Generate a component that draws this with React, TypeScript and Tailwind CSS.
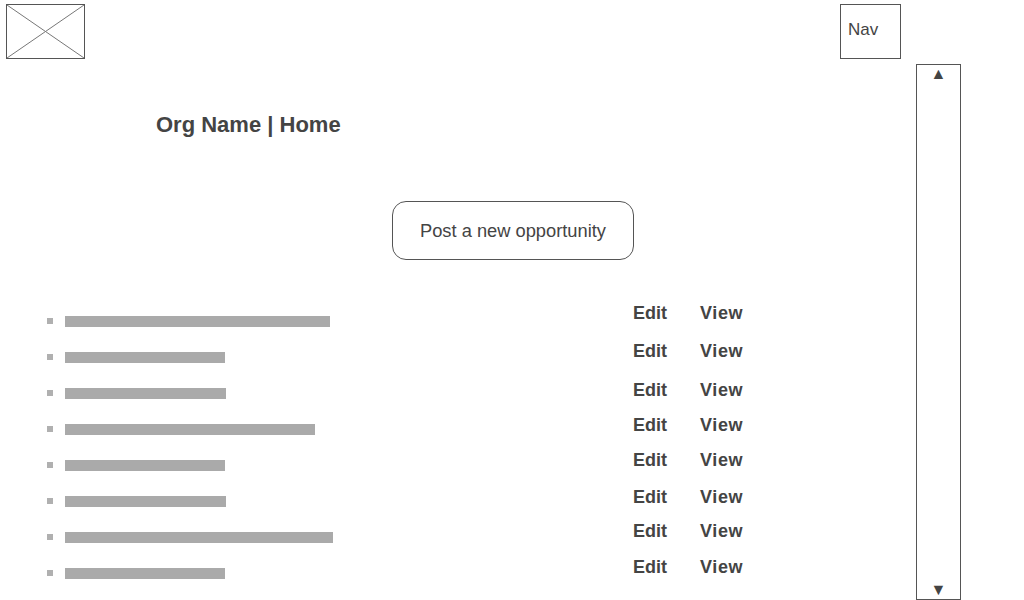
import React from "react";

const bars = [265, 160, 161, 250, 160, 161, 268, 160];
const actionMargins = [0, 18, 19, 15, 15, 17, 14, 16];

export default function App() {
  return (
    <div
      className="relative w-[1024px] h-[600px] overflow-hidden bg-white text-[#444]"
      style={{ fontFamily: '"Liberation Sans", Arial, sans-serif' }}
    >
      <div className="flex">
        <div className="w-[916px] flex flex-col">
          <div className="flex justify-between pt-[4px] pl-[6px] pr-[15px]">
            <div className="w-[79px] h-[55px] border border-[#555]">
              <svg width="77" height="53" viewBox="0 0 77 53" className="block">
                <line x1="0" y1="0" x2="77" y2="53" stroke="#777" strokeWidth="1" />
                <line x1="77" y1="0" x2="0" y2="53" stroke="#777" strokeWidth="1" />
              </svg>
            </div>
            <div className="w-[61px] h-[55px] border border-[#555] flex items-start pt-[15px] pl-[7px] text-[17px] leading-[20px]">
              Nav
            </div>
          </div>
          <div className="mt-[53px] pl-[156px] text-[22px] font-bold leading-[26px]">
            Org Name | Home
          </div>
          <div className="mt-[63px] ml-[392px] w-[242px] h-[59px] border border-[#555] rounded-[14px] flex items-center justify-center text-[18.3px]">
            Post a new opportunity
          </div>
          <div className="flex mt-[43px]">
            <div className="w-[600px] flex flex-col">
              {bars.map((w, i) => (
                <div key={i} className="h-[36px] flex items-center">
                  <div className="ml-[47px] w-[6px] h-[6px] bg-[#b0b0b0]" />
                  <div className="ml-[12px] h-[11px] bg-[#aaa]" style={{ width: w }} />
                </div>
              ))}
            </div>
            <div className="flex flex-col">
              {actionMargins.map((m, i) => (
                <div
                  key={i}
                  className="flex h-[20px] items-center text-[18px] font-bold leading-[20px] ml-[33px]"
                  style={{ marginTop: m }}
                >
                  <span className="w-[67px]">Edit</span>
                  <span className="tracking-[0.6px]">View</span>
                </div>
              ))}
            </div>
          </div>
        </div>
        <div className="mt-[64px] w-[45px] h-[536px] border border-[#555] flex flex-col justify-between items-center text-[16px] leading-none pt-[1px] pb-[1px]">
          <span>▲</span>
          <span>▼</span>
        </div>
      </div>
    </div>
  );
}
